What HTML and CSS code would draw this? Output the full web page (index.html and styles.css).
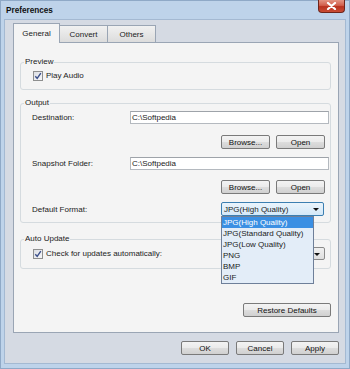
FILE: index.html
```html
<!doctype html>
<html lang="en">
<head>
	<meta charset="utf-8">
	<title>Preferences</title>
	<link rel="stylesheet" href="styles.css">
</head>
<body>
	<div class="window">
		<div class="titlebar">
			<span class="title">Preferences</span>
			<span class="close">
				<svg width="11" height="8" viewBox="0 0 11 8"><path d="M2 1 L9 7 M9 1 L2 7" stroke="#fff" stroke-width="2.2" stroke-linecap="round"/></svg>
			</span>
		</div>
		<div class="client">
			<div class="tabs">
				<span class="tab active">General</span>
				<span class="tab">Convert</span>
				<span class="tab">Others</span>
			</div>
			<div class="page">
				<fieldset class="group preview">
					<legend>Preview</legend>
					<label class="check">
						<span class="box"><svg width="8" height="8" viewBox="0 0 8 8"><path d="M1.3 4.2 L3.2 6.4 L6.8 1.2" fill="none" stroke="#3b4f8a" stroke-width="1.4"/></svg></span>
						Play Audio
					</label>
				</fieldset>
				<fieldset class="group output">
					<legend>Output</legend>
					<div class="field">
						<span class="label">Destination:</span>
						<span class="input">C:\Softpedia</span>
					</div>
					<div class="actions">
						<button>Browse...</button>
						<button>Open</button>
					</div>
					<div class="field snapshot">
						<span class="label">Snapshot Folder:</span>
						<span class="input">C:\Softpedia</span>
					</div>
					<div class="actions">
						<button>Browse...</button>
						<button>Open</button>
					</div>
					<div class="field format">
						<span class="label">Default Format:</span>
						<div class="combo-wrap">
							<span class="combo focused">JPG(High Quality)<span class="arrow"></span></span>
							<ul class="droplist">
								<li class="selected">JPG(High Quality)</li>
								<li>JPG(Standard Quality)</li>
								<li>JPG(Low Quality)</li>
								<li>PNG</li>
								<li>BMP</li>
								<li>GIF</li>
							</ul>
						</div>
					</div>
				</fieldset>
				<fieldset class="group update">
					<legend>Auto Update</legend>
					<div class="field">
						<label class="check">
							<span class="box"><svg width="8" height="8" viewBox="0 0 8 8"><path d="M1.3 4.2 L3.2 6.4 L6.8 1.2" fill="none" stroke="#3b4f8a" stroke-width="1.4"/></svg></span>
							Check for updates automatically:
						</label>
						<span class="combo"><span class="arrow"></span></span>
					</div>
				</fieldset>
				<div class="restore">
					<button class="wide">Restore Defaults</button>
				</div>
			</div>
			<div class="footer">
				<button>OK</button>
				<button>Cancel</button>
				<button>Apply</button>
			</div>
		</div>
	</div>
</body>
</html>
```

FILE: styles.css
```css
html {
	box-sizing: border-box;
	font-family: "Liberation Sans", Arial, sans-serif;
	font-size: 8px;
}

*,
*:before,
*:after {
	box-sizing: inherit;
}

body {
	margin: 0;
	width: 350px;
	height: 369px;
	overflow: hidden;
	color: #1b1b1b;
}

.window {
	height: 369px;
	display: flex;
	flex-direction: column;
	background: #bed3ea;
	border: 1px solid #8fa9c7;
}

.titlebar {
	height: 18px;
	flex-shrink: 0;
	display: flex;
	justify-content: space-between;
	align-items: center;
	padding-left: 5px;
}

.title {
	font-weight: bold;
	font-size: 8.2px;
	color: #111;
}

.close {
	align-self: flex-start;
	margin-top: -1px;
	margin-right: 4px;
	width: 27px;
	height: 13px;
	display: flex;
	align-items: center;
	justify-content: center;
	background: linear-gradient(#e39483 0%, #d2604d 45%, #b9321f 55%, #c94d35 100%);
	border: 1px solid #6e251b;
	border-top: none;
	border-radius: 0 0 4px 4px;
}

.client {
	flex: 1;
	margin: 0 3px 4px 3px;
	background: #d5dae3;
	border: 1px solid #a4b9d2;
	padding: 3px 6px 8px 8px;
	display: flex;
	flex-direction: column;
}

.tabs {
	height: 19px;
	display: flex;
	align-items: flex-end;
}

.tab {
	width: 48px;
	height: 17px;
	display: flex;
	align-items: center;
	justify-content: center;
	background: linear-gradient(#f1f1f1, #dcdcdc);
	border: 1px solid #9aa5b4;
	border-bottom: none;
	border-left: none;
}

.tab.active {
	width: 47px;
	height: 20px;
	margin-bottom: -1px;
	position: relative;
	background: #f4f4f4;
	border-left: 1px solid #9aa5b4;
}

.page {
	flex: 1;
	background: #f4f4f4;
	border: 1px solid #9aa5b4;
	padding: 14px 7px 0 6px;
}

.group {
	margin: 0;
	border: 1px solid #d5dbdf;
	border-radius: 3px;
	padding: 0;
}

.group legend {
	padding: 0 1px;
	margin-left: -9px;
	line-height: 10px;
	color: #222;
}

.preview {
	padding: 2px 0 7px 12px;
}

.output {
	margin-top: 8px;
	padding: 3px 1px 6px 11px;
}

.output legend {
	margin-left: -8px;
}

.update {
	margin-top: 11px;
	padding: 3px 5px 8px 12px;
}

.check {
	height: 13px;
	display: flex;
	align-items: center;
}

.box {
	width: 10px;
	height: 10px;
	margin-right: 3px;
	display: flex;
	align-items: center;
	justify-content: center;
	border: 1px solid #8e8f8f;
	background: linear-gradient(135deg, #dcdfe4, #f6f7f9);
}

.field {
	display: flex;
	align-items: center;
}

.label {
	width: 98px;
	flex-shrink: 0;
}

.input {
	flex: 1;
	height: 13px;
	line-height: 11px;
	padding-left: 1px;
	background: #fff;
	border: 1px solid #b4b9bf;
	border-top-color: #9ea3a9;
}

.snapshot {
	margin-top: 8px;
}

.actions {
	margin-top: 11px;
	margin-right: 4px;
	display: flex;
	justify-content: flex-end;
	gap: 6px;
}

.snapshot + .actions {
	margin-top: 10px;
}

.format {
	margin-top: 8px;
}

button {
	width: 49px;
	height: 14px;
	padding: 0;
	font-family: inherit;
	font-size: 8px;
	color: #111;
	background: linear-gradient(#f3f3f3 0%, #ebebeb 48%, #dddddd 52%, #d0d0d0 100%);
	border: 1px solid #7a7a7a;
	border-radius: 2px;
}

.combo-wrap {
	position: relative;
	margin-left: auto;
	margin-right: 5px;
}

.combo {
	width: 103px;
	height: 14px;
	display: flex;
	align-items: center;
	padding-left: 2px;
	background: linear-gradient(#f0f0f0, #dedede);
	border: 1px solid #8a8a8a;
	border-radius: 2px;
	position: relative;
}

.combo.focused {
	background: linear-gradient(#eaf4fc, #d3e8f8);
	border-color: #3c7fb1;
}

.arrow {
	position: absolute;
	right: 4px;
	top: 5px;
	border-left: 3px solid transparent;
	border-right: 3px solid transparent;
	border-top: 3px solid #111;
}

.update .field {
	height: 13px;
}

.update .combo {
	margin-left: auto;
	height: 13px;
}

.droplist {
	position: absolute;
	z-index: 2;
	top: 100%;
	left: 0;
	width: 93px;
	margin: 0;
	padding: 0;
	list-style: none;
	background: #e3edf8;
	border: 1px solid #6e7f99;
}

.droplist li {
	height: 11px;
	line-height: 11px;
	padding-left: 1px;
}

.droplist li.selected {
	background: #3a8fe3;
	color: #fff;
}

.restore {
	margin-top: 34px;
	display: flex;
	justify-content: flex-end;
}

button.wide {
	width: 88px;
}

.footer {
	margin-top: 8px;
	display: flex;
	justify-content: flex-end;
	gap: 7px;
}

.footer button {
	width: 48px;
}
```
